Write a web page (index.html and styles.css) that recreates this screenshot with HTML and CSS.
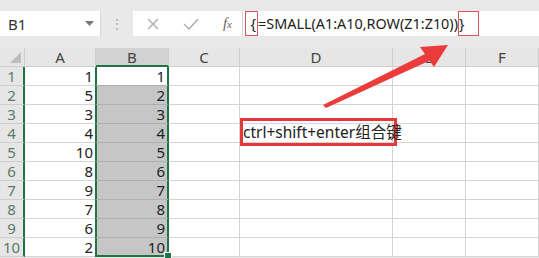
FILE: index.html
```html
<!DOCTYPE html>
<html lang="zh-CN">
<head>
  <meta charset="utf-8" />
  <title>SMALL array formula</title>
  <link rel="stylesheet" href="styles.css">
</head>
<body>
  <div class="bar">
    <div class="namebox">
      <span>B1</span>
      <svg class="drop" width="9" height="5" viewBox="0 0 9 5"><path d="M0 0h9L4.5 5z" fill="#777"/></svg>
    </div>
    <div class="grip">&#8942;</div>
    <div class="formula">
      <div class="fbtns">
        <svg width="14" height="14" viewBox="0 0 14 14"><path d="M2 2l10 10M12 2L2 12" stroke="#aaa" stroke-width="1.4" fill="none"/></svg>
        <svg width="16" height="14" viewBox="0 0 16 14"><path d="M1 7l5 5L15 2" stroke="#aaa" stroke-width="1.4" fill="none"/></svg>
        <span class="fx">f<span class="x">x</span></span>
      </div>
      <div class="ftext">
        <span class="mark first">{</span><span class="expr">=SMALL(A1:A10,ROW(Z1:Z10))</span><span class="mark last">}</span>
      </div>
    </div>
  </div>

  <div class="sheet">
    <div class="corner"><svg width="11" height="11" viewBox="0 0 11 11"><path d="M11 0v11H0z" fill="#bdbdbd"/></svg></div>
    <div class="colhead">A</div>
    <div class="colhead sel">B</div>
    <div class="colhead">C</div>
    <div class="colhead">D</div>
    <div class="colhead">E</div>
    <div class="colhead">F</div>
  </div>

  <div class="overlay note">ctrl+shift+enter组合键</div>
  <svg class="overlay arrow" width="539" height="258" viewBox="0 0 539 258">
    <path d="M323 105L427 53L431 60L326 108z" fill="#ec3b3b"/>
    <path d="M448 45L420 47L434 67z" fill="#ec3b3b"/>
  </svg>

  <script>
    var a = [1, 5, 3, 4, 10, 8, 9, 7, 6, 2];
    var sheet = document.querySelector('.sheet');
    a.forEach(function (v, i) {
      var html = '<div class="rowhead">' + (i + 1) + '</div>' +
        '<div class="cell num">' + v + '</div>' +
        '<div class="cell num b' + (i === 0 ? ' active' : '') + (i === 9 ? ' end' : '') + '">' + (i + 1) + '</div>' +
        '<div class="cell"></div><div class="cell"></div><div class="cell"></div><div class="cell"></div>';
      sheet.insertAdjacentHTML('beforeend', html);
    });
  </script>
</body>
</html>
```

FILE: styles.css
```css
html, body {
  margin: 0;
  padding: 0;
  width: 539px;
  height: 258px;
  overflow: hidden;
  background: #e9e9e9;
  font-family: 'Noto Sans', 'Noto Sans CJK SC', sans-serif;
  color: #222;
}
body {
  position: relative;
}
.bar {
  display: flex;
  height: 25px;
  margin-top: 11px;
  margin-bottom: 12px;
}
.namebox {
  width: 101px;
  background: #fff;
  display: flex;
  align-items: center;
  justify-content: space-between;
  padding: 0 6px 0 8px;
  box-sizing: border-box;
  font-size: 15px;
  color: #333;
  border-right: 1px solid #d6d6d6;
}
.grip {
  width: 32px;
  text-align: center;
  color: #aaa;
  font-size: 14px;
  line-height: 25px;
}
.formula {
  flex: 1;
  display: flex;
  background: #fff;
}
.fbtns {
  width: 110px;
  display: flex;
  align-items: center;
  justify-content: space-between;
  padding: 0 10px 0 13px;
  box-sizing: border-box;
  border-right: 1px solid #d6d6d6;
}
.fx {
  font-family: 'Liberation Serif', serif;
  font-style: italic;
  font-size: 15px;
  color: #666;
}
.fx .x {
  font-size: 11px;
}
.ftext {
  display: flex;
  align-items: stretch;
  padding-left: 2px;
  font-size: 14.4px;
  color: #222;
}
.ftext span {
  display: flex;
  align-items: center;
}
.mark {
  border: 1px solid #d9545a;
  box-sizing: border-box;
}
.mark.first {
  width: 13px;
  justify-content: flex-end;
  padding-right: 1px;
}
.mark.last {
  width: 21px;
  padding-left: 0;
}
.sheet {
  display: grid;
  grid-template-columns: 25px 71px 73px 71px 153px 73px 1fr;
  grid-auto-rows: 19px;
  background: #fff;
}
.corner, .colhead, .rowhead {
  background: #e6e6e6;
  color: #444;
  font-size: 15px;
  box-sizing: border-box;
}
.corner {
  display: flex;
  align-items: flex-end;
  justify-content: flex-end;
  padding: 0 3px 3px 0;
  border-right: 1px solid #cfcfcf;
  border-bottom: 1px solid #cfcfcf;
}
.colhead {
  display: flex;
  align-items: center;
  justify-content: center;
  border-right: 1px solid #cfcfcf;
  border-bottom: 1px solid #cfcfcf;
}
.colhead.sel {
  background: #d2d2d2;
  border-bottom: 2px solid #217346;
}
.rowhead {
  display: flex;
  align-items: center;
  justify-content: center;
  color: #5b7a65;
  border-bottom: 1px solid #cfcfcf;
  border-right: 2px solid #217346;
}
.cell {
  border-right: 1px solid #d4d4d4;
  border-bottom: 1px solid #d4d4d4;
  box-sizing: border-box;
  font-size: 15px;
  display: flex;
  align-items: center;
  justify-content: flex-end;
  padding-right: 2px;
}
.cell.b {
  background: #c6c6c6;
  border-left: 2px solid #217346;
  border-right: 2px solid #217346;
  border-bottom-color: #b0b0b0;
  margin-left: -1px;
}
.cell.b.active {
  background: #fff;
}
.cell.b.end {
  border-bottom: 2px solid #217346;
  position: relative;
}
.cell.b.end::after {
  content: "";
  position: absolute;
  right: -5px;
  bottom: -5px;
  width: 6px;
  height: 6px;
  background: #217346;
  border: 1px solid #fff;
}
.overlay {
  position: absolute;
}
.note {
  left: 240px;
  top: 118px;
  width: 157px;
  height: 28px;
  border: 3px solid #e5383b;
  box-sizing: border-box;
  font-size: 15.5px;
  line-height: 22px;
  padding-left: 0;
  color: #222;
  white-space: nowrap;
}
.arrow {
  left: 0;
  top: 0;
}
```
